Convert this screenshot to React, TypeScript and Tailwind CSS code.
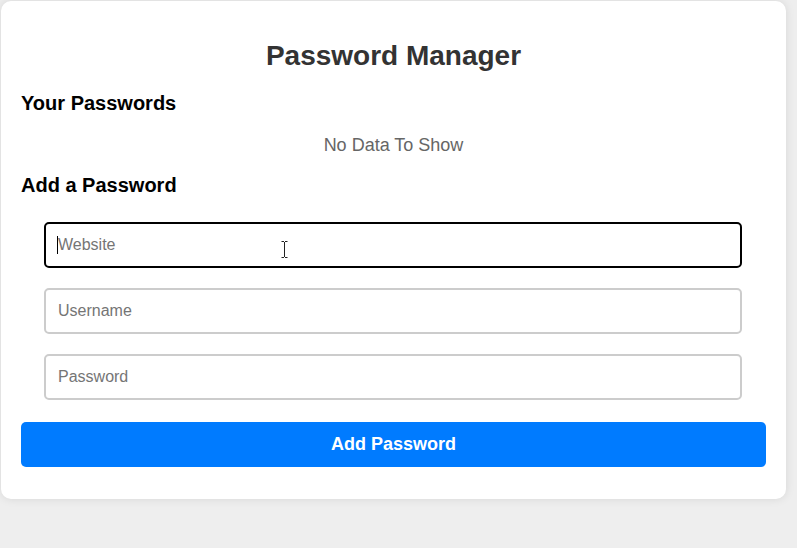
import React from "react";

export default function App() {
  const font = { fontFamily: '"Liberation Sans", Arial, sans-serif' };
  return (
    <div className="min-h-[548px] w-full bg-[#eeeeee] pt-px pl-px" style={font}>
      <div className="w-[785px] h-[498px] rounded-[10px] bg-white px-5 pt-5 shadow-[0_0_10px_rgba(0,0,0,0.1)]">
        <h1 className="mt-[19px] text-center text-[28px] leading-[32px] font-bold text-[#333333]">
          Password Manager
        </h1>
        <h3 className="mt-[20px] text-[20px] leading-[23px] font-bold text-black">
          Your Passwords
        </h3>
        <p className="mt-[20px] text-center text-[18px] leading-[21px] text-[#666666]">
          No Data To Show
        </p>
        <h3 className="mt-[18px] text-[20px] leading-[23px] font-bold text-black">
          Add a Password
        </h3>
        <div className="mt-[25px] ml-[23px] flex flex-col items-start gap-5">
          <div className="relative w-[698px]">
            <input
              placeholder="Website"
              className="block h-[46px] w-full rounded-[5px] border-2 border-black px-3 text-[16px] text-[#333] placeholder:text-[#757575] outline-none"
            />
            <span className="pointer-events-none absolute left-[13px] top-[14px] h-[18px] w-px bg-black" />
            <svg
              className="pointer-events-none absolute left-[237px] top-[19px]"
              width="7"
              height="17"
              viewBox="0 0 7 17"
            >
              <path d="M0.5 0.5h2.5M4 0.5h2.5M3.5 1v15M0.5 16.5h2.5M4 16.5h2.5" stroke="#222" strokeWidth="1" fill="none" />
            </svg>
          </div>
          <input
            placeholder="Username"
            className="block h-[46px] w-[698px] rounded-[5px] border-2 border-[#cccccc] px-3 text-[16px] text-[#333] placeholder:text-[#757575] outline-none"
          />
          <input
            placeholder="Password"
            type="password"
            className="block h-[46px] w-[698px] rounded-[5px] border-2 border-[#cccccc] px-3 text-[16px] text-[#333] placeholder:text-[#757575] outline-none"
          />
        </div>
        <button className="mt-[22px] block h-[45px] w-full rounded-[5px] bg-[#007bff] text-[18px] font-bold text-white">
          Add Password
        </button>
      </div>
    </div>
  );
}
